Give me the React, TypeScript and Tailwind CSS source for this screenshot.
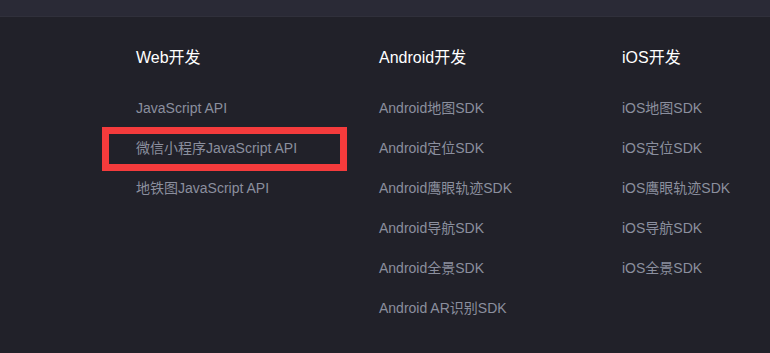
import React from "react";

const cols = [
  { title: "Web开发", links: ["JavaScript API", "微信小程序JavaScript API", "地铁图JavaScript API"] },
  {
    title: "Android开发",
    links: ["Android地图SDK", "Android定位SDK", "Android鹰眼轨迹SDK", "Android导航SDK", "Android全景SDK", "Android AR识别SDK"],
  },
  { title: "iOS开发", links: ["iOS地图SDK", "iOS定位SDK", "iOS鹰眼轨迹SDK", "iOS导航SDK", "iOS全景SDK"] },
];

export default function App() {
  return (
    <div
      className="w-[770px] h-[353px] overflow-hidden bg-[#212129] flex flex-col"
      style={{ fontFamily: '"Liberation Sans", Arial, "Noto Sans CJK SC", sans-serif' }}
    >
      <div className="h-[17px] bg-[#2a2a36] border-b border-[#30303b] shrink-0" />
      <div className="flex pl-[136px] pt-[31px]">
        {cols.map((c, ci) => (
          <div key={ci} className="w-[243px] shrink-0 flex flex-col">
            <div className="text-[16px] leading-[20px] text-white">{c.title}</div>
            <div className="flex flex-col gap-[20px] mt-[30px]">
              {c.links.map((l, li) => (
                <div key={li} className="relative text-[14px] leading-[20px] text-[#8b8f9e] whitespace-nowrap">
                  {l}
                  {ci === 0 && li === 1 && (
                    <div className="absolute left-[-34px] top-[-11px] w-[245px] h-[44px] border-[7px] border-[#f43b3c]" />
                  )}
                </div>
              ))}
            </div>
          </div>
        ))}
      </div>
    </div>
  );
}
